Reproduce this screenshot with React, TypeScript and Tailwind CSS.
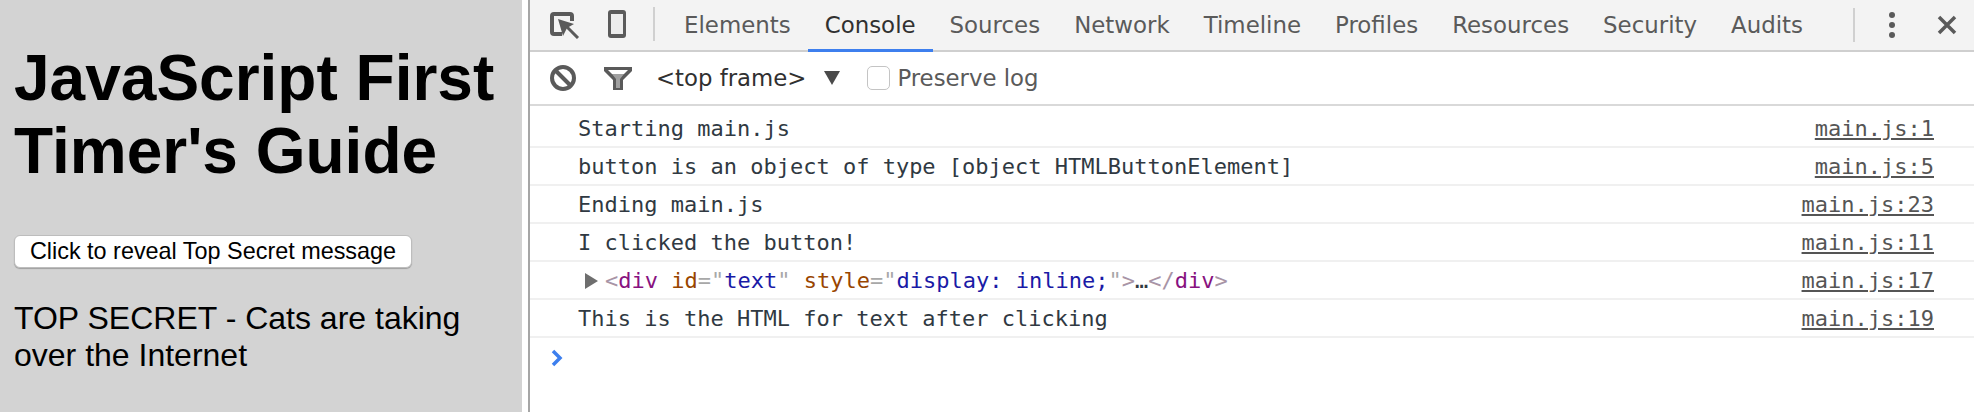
const tabs = ['Elements', 'Console', 'Sources', 'Network', 'Timeline', 'Profiles', 'Resources', 'Security', 'Audits'];

const logs = [
  { text: 'Starting main.js', source: 'main.js:1' },
  { text: 'button is an object of type [object HTMLButtonElement]', source: 'main.js:5' },
  { text: 'Ending main.js', source: 'main.js:23' },
  { text: 'I clicked the button!', source: 'main.js:11' },
  { text: '', source: 'main.js:17' },
  { text: 'This is the HTML for text after clicking', source: 'main.js:19' },
];

function InspectIcon() {
  return (
    <svg width="30" height="30" viewBox="0 0 30 30" className="shrink-0">
      <path d="M12 25H4a2 2 0 0 1-2-2V7a2 2 0 0 1 2-2h16a2 2 0 0 1 2 2v5" fill="none" stroke="#5a5a5a" strokeWidth="4" />
      <path d="M8 10l16 5-7 4-4 8z" fill="#5a5a5a" />
      <path d="M17 18l11 11" stroke="#5a5a5a" strokeWidth="3" />
    </svg>
  );
}

function DeviceIcon() {
  return (
    <svg width="18" height="30" viewBox="0 0 18 30" className="shrink-0">
      <rect x="0" y="1" width="18" height="28" rx="3" fill="#5a5a5a" />
      <rect x="3" y="5" width="12" height="20" fill="#ececec" />
    </svg>
  );
}

function ClearIcon() {
  return (
    <svg width="26" height="26" viewBox="0 0 26 26" className="shrink-0">
      <circle cx="13" cy="13" r="11" fill="none" stroke="#5a5a5a" strokeWidth="4" />
      <path d="M5.5 5.5l15 15" stroke="#5a5a5a" strokeWidth="4" />
    </svg>
  );
}

function FilterIcon() {
  return (
    <svg width="28" height="23" viewBox="0 0 28 23" className="shrink-0">
      <path d="M0 0h28v4l-9 9v10H9V13L0 4z" fill="#5a5a5a" />
      <path d="M4 3h20l-4 4H8z" fill="#fff" />
      <path d="M8 7h12l-4 5v9h-4v-9z" fill="#a0a0a0" />
    </svg>
  );
}

function DivLog() {
  return (
    <span className="flex items-center">
      <span className="ml-[7px] mr-[7px] w-0 h-0 border-y-[8px] border-y-transparent border-l-[13px] border-l-[#6e6e6e]" />
      <span>
        <span className="text-[#a894a6]">&lt;</span>
        <span className="text-[#881280]">div</span>
        <span> </span>
        <span className="text-[#994500]">id</span>
        <span className="text-[#a8a8a8]">=&quot;</span>
        <span className="text-[#1a1aa6]">text</span>
        <span className="text-[#a8a8a8]">&quot;</span>
        <span> </span>
        <span className="text-[#994500]">style</span>
        <span className="text-[#a8a8a8]">=&quot;</span>
        <span className="text-[#1a1aa6]">display: inline;</span>
        <span className="text-[#a8a8a8]">&quot;</span>
        <span className="text-[#a894a6]">&gt;</span>
        <span className="text-[#303942]">…</span>
        <span className="text-[#a894a6]">&lt;/</span>
        <span className="text-[#881280]">div</span>
        <span className="text-[#a894a6]">&gt;</span>
      </span>
    </span>
  );
}

export default function App() {
  return (
    <div className="flex w-[1974px] h-[412px] bg-white overflow-hidden">
      {/* Page */}
      <div className="w-[522px] shrink-0 bg-[#d3d3d3] pl-[14px] font-['Liberation_Sans',sans-serif] text-black">
        <h1 className="mt-[42px] text-[64px] leading-[73px] font-bold">JavaScript First Timer's Guide</h1>
        <button className="mt-[47px] block w-[398px] h-[33px] bg-white rounded-[6px] border border-[#bdbdbd] shadow-[0_1px_1px_rgba(0,0,0,0.25)] text-[23.4px] leading-[31px]">
          Click to reveal Top Secret message
        </button>
        <p className="mt-[32px] text-[32px] leading-[37px]">TOP SECRET - Cats are taking over the Internet</p>
      </div>

      {/* DevTools */}
      <div className="ml-[6px] flex-1 border-l-[2px] border-[#a6a6a6] flex flex-col">
        <div className="h-[52px] shrink-0 bg-[#f3f3f3] border-b-[2px] border-[#cfcfcf] flex items-center font-['DejaVu_Sans',sans-serif] text-[22.9px]">
          <div className="ml-[20px] mt-[-2px] flex items-center">
            <InspectIcon />
            <div className="ml-[28px]"><DeviceIcon /></div>
            <div className="ml-[27px] w-[2px] h-[34px] bg-[#d0d0d0]" />
          </div>
          <div className="ml-[12px] flex h-full">
            {tabs.map((tab) => (
              <div
                key={tab}
                className={
                  tab === 'Console'
                    ? 'px-[17px] pt-[1px] h-[52px] flex items-center border-b-[3px] border-[#3d7fee] text-[#303030]'
                    : 'px-[17px] pt-[1px] h-[50px] flex items-center text-[#5a5a5a]'
                }
              >
                {tab}
              </div>
            ))}
          </div>
          <div className="flex-1" />
          <div className="mr-[6px] w-[2px] h-[34px] bg-[#d0d0d0]" />
          <div className="ml-[28px] flex flex-col gap-[4px]">
            <span className="w-[6px] h-[6px] rounded-full bg-[#5a5a5a]" />
            <span className="w-[6px] h-[6px] rounded-full bg-[#5a5a5a]" />
            <span className="w-[6px] h-[6px] rounded-full bg-[#5a5a5a]" />
          </div>
          <svg width="20" height="20" viewBox="0 0 20 20" className="ml-[42px] mr-[17px]">
            <path d="M2 2l16 16M18 2L2 18" stroke="#5a5a5a" strokeWidth="3.5" />
          </svg>
        </div>

        <div className="h-[54px] shrink-0 border-b-[2px] border-[#d9d9d9] flex items-center font-['DejaVu_Sans',sans-serif] text-[22.8px] text-[#303030]">
          <div className="ml-[20px]"><ClearIcon /></div>
          <div className="ml-[28px]"><FilterIcon /></div>
          <span className="ml-[24px] pt-[1px]">&lt;top frame&gt;</span>
          <span className="ml-[18px] w-0 h-0 border-x-[8px] border-x-transparent border-t-[14px] border-t-[#4a4a4a]" />
          <span className="ml-[27px] w-[23px] h-[24px] rounded-[5px] border border-[#c4c4c4] bg-white" />
          <span className="ml-[7px] pt-[1px] text-[#5a5a5a]">Preserve log</span>
        </div>

        <div className="pt-[4px] font-['DejaVu_Sans_Mono',monospace] text-[22px] text-[#303942]">
          {logs.map((log) => (
            <div key={log.source} className="h-[38px] pt-[1px] border-b-[2px] border-[#f0f0f0] flex items-center pl-[48px] pr-[40px] justify-between whitespace-pre">
              {log.text ? <span>{log.text}</span> : <DivLog />}
              <span className="underline text-[#555555]">{log.source}</span>
            </div>
          ))}
          <div className="pl-[21px] pt-[11px]">
            <svg width="12" height="18" viewBox="0 0 12 18">
              <path d="M2 2l7 7-7 7" fill="none" stroke="#3d7fee" strokeWidth="3.5" />
            </svg>
          </div>
        </div>
      </div>
    </div>
  );
}
